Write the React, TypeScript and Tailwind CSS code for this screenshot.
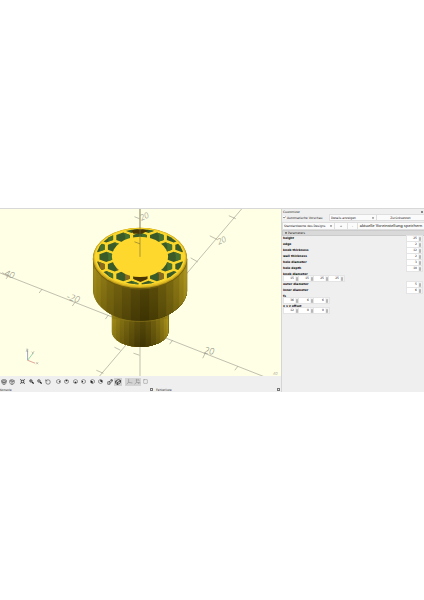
import React from 'react';
import { Check, Cuboid, Package, PackageOpen, RotateCcw, Square } from 'lucide-react';

interface Param {
  name: string;
  values: number[];
}

const params: Param[] = [
  { name: 'height', values: [25] },
  { name: 'edge', values: [2] },
  { name: 'knob thickness', values: [12] },
  { name: 'wall thickness', values: [2] },
  { name: 'hole diameter', values: [3] },
  { name: 'hole depth', values: [10] },
  { name: 'knob diameter', values: [15, 15, 25, 25] },
  { name: 'outer diameter', values: [5] },
  { name: 'inner diameter', values: [6] },
  { name: 'fs', values: [36, 6, 6] },
  { name: 'x y z offset', values: [12, 0, 0] },
];

const CX = 139.5;
const CY = 48;

// side colours of the knob, left to right
const shades = [
  '#8a7714', '#968116', '#8d7913', '#806d10', '#73620d', '#67570b', '#5a4c08', '#4d4006',
  '#443903', '#4f4205', '#5f5109', '#6f5f0c', '#806d10', '#917d14', '#a18b19', '#9a851a',
];

const facets = (rx: number) =>
  shades.map((fill, i) => {
    const n = shades.length;
    const x0 = CX - rx * Math.cos((Math.PI * i) / n);
    // each facet runs under the next one, so no seam shows
    return { fill, x: x0, w: CX + rx - x0 };
  });

const hexPoints = (x: number, y: number) => {
  const pts = [[0, -5], [6.8, -2.5], [6.8, 2.5], [0, 5], [-6.8, 2.5], [-6.8, -2.5]];
  return pts.map(([dx, dy]) => `${x + dx},${y + dy}`).join(' ');
};

const holes: { x: number; y: number; row: number }[] = [];
for (let row = -3; row <= 3; row++) {
  for (let col = -3; col <= 3; col++) {
    const x = CX + (col + (row % 2 === 0 ? 0 : 0.5)) * 16.8;
    holes.push({ x, y: CY + row * 9.6, row });
  }
}

const Scene: React.FC = () => (
  <svg className="block h-[167px] w-full bg-[#ffffe5]" viewBox="0 0 280 167" preserveAspectRatio="xMidYMid slice" role="img" aria-label="3D">
    <defs>
      <linearGradient id="fade" x1="0" y1="0" x2="0" y2="1">
        <stop offset="0" stopColor="#ffe040" stopOpacity="0.1" />
        <stop offset="1" stopColor="#000" stopOpacity="0.12" />
      </linearGradient>
      <clipPath id="rim"><ellipse cx={CX} cy="48" rx="43.500" ry="27.500" /></clipPath>
      <clipPath id="head"><path d="M92.500 50V82C94 98 114 112 139.500 112S185 98 186.500 82V50Z" /></clipPath>
      <clipPath id="stem"><path d="M111 100V122C112 131 124 137.500 139.500 137.500S167 131 168 122V100Z" /></clipPath>
    </defs>
    <g stroke="#96968a" strokeWidth="0.6" fill="none">
      <path d="M0 64 263.500 167.500M241 0 99 167M139.500 0V167" />
      <path d="M6 70 9 66M39 84 42 80M72 97 75 93M105 110 108 106M169 135 172 131M202 149 205 143M234 161 237 157" />
      <path d="M228 7 235 10M209 27 217 31M190 49 197 53M114 138 120 141M96 161 103 164M134 8 139 10M133 144 139 146" />
    </g>
    <g fill="#8c8c80" className="text-[9px] font-light italic" fontFamily="Noto Sans, sans-serif">
      <text transform="translate(1 66) rotate(18)">-40</text>
      <text transform="translate(66 90) rotate(18)">-20</text>
      <text transform="translate(203 144) rotate(8)">20</text>
      <text className="text-[8px]" transform="translate(218 36) rotate(-25)">20</text>
      <text className="text-[8px]" transform="translate(141 12) rotate(-25)">20</text>
      <text className="text-[4px]" x="272" y="166">40</text>
    </g>

    <g clipPath="url(#stem)">
      {facets(28.5).map((f, i) => <rect key={i} x={f.x} y="95" width={f.w} height="45" fill={f.fill} />)}
      <rect x="110" y="110" width="60" height="29" fill="url(#fade)" />
    </g>
    <g clipPath="url(#head)">
      {facets(47).map((f, i) => <rect key={i} x={f.x} y="48" width={f.w} height="66" fill={f.fill} />)}
      <rect x="92" y="60" width="95" height="53" fill="url(#fade)" />
    </g>
    <path d="M111 106.500C118 110.500 128 112.300 139.500 112.300S161 110.500 168 106.500" stroke="#8f7b1c" strokeWidth="0.6" fill="none" />

    <ellipse cx={CX} cy="50" rx="47" ry="30.500" fill="#6f5d0c" />
    <ellipse cx={CX} cy="49" rx="46.800" ry="30" fill="#c29f1a" />
    <ellipse cx={CX} cy="48.500" rx="46" ry="29.500" fill="#e6c024" />
    <ellipse cx={CX} cy="48" rx="45" ry="28.500" fill="#fbd72c" />
    <g clipPath="url(#rim)">
      {holes.map((h, i) => {
        const brown = (h.row === 2 && Math.abs(h.x - CX) < 20) || (h.row === 1 && h.x < CX);
        return (
          <g key={i}>
            <polygon points={hexPoints(h.x, h.y)} fill="#3a5a28" />
            <path d={`M${h.x} ${h.y - 5}L${h.x + 6.8} ${h.y - 2.5}V${h.y + 2.5}L${h.x + 2} ${h.y + 4}V${h.y - 2}Z`} fill={brown ? '#8a6a1b' : '#47702f'} />
          </g>
        );
      })}
      <path d="M131 22 139 19 148 22 141 25 133 25Z M133 67H147V70L140 73 133 70Z" fill="#4a3505" />
    </g>
    <ellipse cx={CX} cy="48" rx="28" ry="20" fill="#fed82c" />
    <path d="M139.500 0V48M134 33 139.500 35" stroke="#776b36" strokeWidth="0.6" fill="none" />

    <g strokeWidth="0.7" fill="none">
      <path d="M27.500 151V141" stroke="#777fc0" />
      <path d="M27.500 151 33 144" stroke="#70c590" />
      <path d="M27.500 151 35 154" stroke="#d48075" />
      <path d="M26 140H28L26 142H28M31.500 142.500 33 144M34 142 32 145M36 153 38 155M38 153 36 155" stroke="#888" strokeWidth="0.5" />
    </g>
  </svg>
);

const tools = [
  { label: 'Vorschau', Icon: PackageOpen, cls: '' },
  { label: 'Rendern', Icon: Package, cls: '' },
  { label: 'Alles anzeigen', Icon: Square, cls: 'ml-[2px]' },
  { label: 'Vergrößern', Icon: Square, cls: 'ml-px' },
  { label: 'Verkleinern', Icon: Square, cls: '' },
  { label: 'Ansicht zurücksetzen', Icon: RotateCcw, cls: 'ml-px' },
  { label: 'Rechts', Icon: Square, cls: 'ml-[2px]' },
  { label: 'Oben', Icon: Square, cls: '' },
  { label: 'Unten', Icon: Square, cls: 'ml-px' },
  { label: 'Links', Icon: Square, cls: '' },
  { label: 'Vorne', Icon: Square, cls: 'ml-px' },
  { label: 'Hinten', Icon: Square, cls: '' },
  { label: 'Perspektive', Icon: Square, cls: 'ml-[2px]' },
  { label: 'Orthogonal', Icon: Cuboid, cls: 'bg-[#cfcfcf]' },
  { label: 'Achsen', Icon: Square, cls: 'ml-[3px] bg-[#d4d4d4]' },
  { label: 'Skalenmarkierungen', Icon: Square, cls: 'bg-[#d4d4d4]' },
  { label: 'Kanten', Icon: Square, cls: '' },
];

const ToolIcon: React.FC<{ index: number }> = ({ index }) => {
  const { Icon } = tools[index];
  if (index >= 6 && index <= 11) {
    // view cubes: the solid face tells the direction
    const face = ['M14 8 18 10V15L14 17Z', 'M6 8 12 4 18 8 12 12Z', 'M6 15 12 12 18 15 12 20Z', 'M5 9 10 8V16L5 15Z', 'M4 7 13 11V21L4 17Z', 'M11 4 20 7V16L11 12Z'][index - 6];
    return (
      <svg className="size-[5px]" viewBox="0 0 24 24" fill="none" stroke="#444" strokeWidth="2.500">
        <path d="M12 2 21 7V17L12 22 3 17V7Z" />
        <path d={face} fill="#222" stroke="none" />
      </svg>
    );
  }
  if (index === 2) {
    return (
      <svg className="size-[5px]" viewBox="0 0 24 24" fill="none" stroke="#222" strokeWidth="3.500">
        <path d="M6 6H18V18H6ZM1 1 7 7M23 1 17 7M1 23 7 17M23 23 17 17" />
      </svg>
    );
  }
  if (index === 3 || index === 4) {
    return (
      <svg className="size-[5px]" viewBox="0 0 24 24" fill="none" stroke="#222" strokeWidth="3">
        <circle cx="9" cy="9" r="6" />
        <path d="M14 14 22 22" strokeWidth="6" />
        <path d={index === 3 ? 'M6 9H12M9 6V12' : 'M6 9H12'} />
      </svg>
    );
  }
  if (index === 12) {
    return (
      <svg className="size-[6px]" viewBox="0 0 24 24" fill="none" stroke="#333" strokeWidth="2.500">
        <path d="M3 11H12V21H3ZM8 11 20 3 21 8 12 18M14 3H21V9" />
      </svg>
    );
  }
  if (index === 14 || index === 15) {
    return (
      <svg className="size-[7px]" viewBox="0 0 24 24" fill="none" stroke="#888" strokeWidth="2">
        <path d="M9 3V15L2 21M9 15 22 17" />
        {index === 15 && <path d="M13 6H17V10M15 20 18 13M6 7H12" />}
      </svg>
    );
  }
  return <Icon className={index === 16 ? 'size-[5px]' : 'size-[6px]'} strokeWidth={index === 13 ? 3 : 2} color={index === 16 ? '#777' : '#333'} />;
};

const SpinBox: React.FC<{ id: string; label?: string; value: number }> = ({ id, label, value }) => (
  <span className="flex h-[5px] w-[15px] flex-none bg-white shadow-[0_0_0_1px_#e4e4e4]">
    <input id={id} aria-label={label} defaultValue={value} className="w-[11px] min-w-0 bg-white pr-px text-right leading-[5px]" />
    <button aria-label="ändern" className="flex w-[4px] items-center justify-center bg-[#f2f2f2]">
      <svg className="h-[4px] w-[2px]" viewBox="0 0 4 8" fill="#666"><path d="M0 3 2 0 4 3ZM0 5 2 8 4 5Z" /></svg>
    </button>
  </span>
);

const ParamRow: React.FC<{ param: Param }> = ({ param }) => {
  const id = param.name.replace(/ /g, '-');
  if (param.values.length === 1) {
    return (
      <div className="flex h-[6px] justify-between">
        <label htmlFor={id} className="font-bold leading-[4px] text-black">{param.name}</label>
        <SpinBox id={id} value={param.values[0]} />
      </div>
    );
  }
  return (
    <fieldset>
      <legend className="h-[4px] font-bold leading-[4px] text-black">{param.name}</legend>
      <div className="flex h-[6px] pl-px">
        {param.values.map((v, i) => <SpinBox key={i} id={`${id}-${i}`} label={`${param.name} ${i + 1}`} value={v} />)}
      </div>
    </fieldset>
  );
};

const Arrow: React.FC = () => (
  <svg className="pointer-events-none absolute right-[2px] top-[2px] size-[2px]" viewBox="0 0 4 4" fill="#444"><path d="M0 1H4L2 4Z" /></svg>
);

const Customizer: React.FC = () => (
  <aside className="w-[143px] flex-none border-l border-[#d5d5d5] bg-[#efefef] pl-px">
    <div className="flex h-[5px] items-center justify-between pr-px">
      <h2>Customizer</h2>
      <button aria-label="Schließen" className="size-[2px] bg-[#888]" />
    </div>
    <div className="flex h-[7px] items-center gap-px">
      <label className="flex flex-1 items-center gap-px">
        <span className="relative flex size-[3px] items-center">
          <input type="checkbox" defaultChecked className="size-[3px] appearance-none bg-white" />
          <Check className="pointer-events-none absolute inset-0 size-[3px]" strokeWidth={5} />
        </span>
        Automatische Vorschau
      </label>
      <div className="relative flex">
        <select aria-label="Details" className="h-[5px] w-[46px] appearance-none bg-[#fbfbfb] pl-px leading-[4px] shadow-[0_0_0_1px_#dedede]">
          <option>Details anzeigen</option>
        </select>
        <Arrow />
      </div>
      <button className="h-[5px] w-[47px] bg-[#fbfbfb] shadow-[0_0_0_1px_#dedede]">Zurücksetzen</button>
    </div>
    <div className="mt-px flex h-[8px] items-center gap-px">
      <div className="relative flex flex-1">
        <select aria-label="Voreinstellung" className="h-[6px] w-full appearance-none bg-[#fbfbfb] pl-px leading-[4px] shadow-[0_0_0_1px_#dedede]">
          <option>Standardwerte des Designs</option>
        </select>
        <Arrow />
      </div>
      <button className="h-[6px] w-[12px] bg-[#fbfbfb] shadow-[0_0_0_1px_#dedede]">+</button>
      <button className="h-[6px] w-[9px] bg-[#fbfbfb] shadow-[0_0_0_1px_#dedede]">-</button>
      <button className="h-[6px] w-[66px] whitespace-nowrap bg-[#fbfbfb] font-['Noto_Sans',sans-serif] text-[4px] text-black shadow-[0_0_0_1px_#dedede]">aktuelle Voreinstellung speichern</button>
    </div>
    <h3 className="mt-px flex h-[4px] items-center gap-px bg-[#d9d9d9] pl-[2px] shadow-[0_0_0_1px_#cbcbcb]">
      <svg className="size-[2px]" viewBox="0 0 4 4"><path d="M0 1H4L2 4Z" /></svg>
      Parameters
    </h3>
    <div className="mt-px pr-[2px]">
      {params.map(p => <ParamRow key={p.name} param={p} />)}
    </div>
  </aside>
);

const DockTitle: React.FC<{ title: string }> = ({ title }) => (
  <div className="flex flex-1 items-center justify-between pr-px">
    <span>{title}</span>
    <button aria-label="Schließen" className="size-[3px] border border-[#777]" />
  </div>
);

export default function App() {
  return (
    <div className="flex min-h-screen items-center bg-white font-['DejaVu_Sans',sans-serif] text-[3px] leading-[4px] text-[#222]">
      <div className="flex w-full border-t border-[#d8d8d8] bg-[#efefef]">
        <main className="min-w-0 flex-1">
          <Scene />
          <div className="flex h-[11px] items-center">
            {tools.map((t, i) => (
              <button key={t.label} aria-label={t.label} className={`flex h-[8px] w-[8px] items-center justify-center ${t.cls}`}>
                <ToolIcon index={i} />
              </button>
            ))}
          </div>
          <div className="flex h-[5px]">
            <div className="flex w-[154px]"><DockTitle title="Konsole" /></div>
            <div className="flex flex-1 pl-[2px]"><DockTitle title="Fehlerliste" /></div>
          </div>
        </main>
        <Customizer />
      </div>
    </div>
  );
}
